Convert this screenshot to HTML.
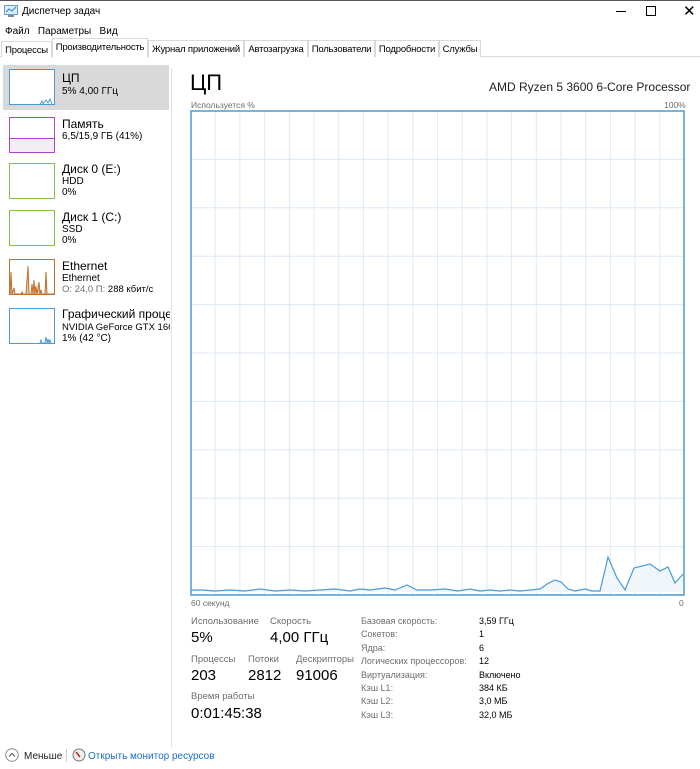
<!DOCTYPE html>
<html><head><meta charset="utf-8"><style>
*{margin:0;padding:0;box-sizing:border-box}
body{width:700px;height:769px;background:#fff;font-family:"Liberation Sans",sans-serif;position:relative;overflow:hidden;color:#000}
.a{position:absolute;white-space:nowrap}
.s{font-size:10px}
.g{color:#6d6d6d}
.tab{position:absolute;top:40px;height:17px;font-size:9.5px;padding:3px 0 0;text-align:center;border:1px solid #d9d9d9;border-bottom:none;background:#fff;overflow:hidden;white-space:nowrap;letter-spacing:-0.2px}
.th{position:absolute;left:9px;width:46px;height:36px;border:1px solid}
.t13{font-size:12px}
</style></head><body>
<div class="a" style="left:0;top:0;width:700px;height:1px;background:#555"></div>
<svg class="a" style="left:4px;top:5px" width="14" height="12"><rect x="0.5" y="0.5" width="13" height="9" fill="#dbeefc" stroke="#6aa0d0"/><polyline points="2,7 5,4 8,6 12,2" fill="none" stroke="#2a7fc4"/><rect x="4" y="10" width="6" height="2" fill="#888"/></svg>
<div class="a s" style="left:22px;top:6px">Диспетчер задач</div>
<div class="a" style="left:616px;top:11px;width:10px;height:1px;background:#000"></div>
<div class="a" style="left:646px;top:6px;width:10px;height:10px;border:1px solid #000"></div>
<div class="a" style="left:683px;top:2px;font-size:15px">✕</div>
<div class="a s" style="left:5px;top:26px">Файл&nbsp;&nbsp;&nbsp;Параметры&nbsp;&nbsp;&nbsp;Вид</div>
<div class="a" style="left:0;top:56px;width:700px;height:1px;background:#d9d9d9"></div>
<div class="tab" style="left:1px;top:41px;height:16px;width:51px">Процессы</div>
<div class="tab" style="left:52px;top:38px;height:20px;width:96px;border-bottom:1px solid #fff;padding-top:3px">Производительность</div>
<div class="tab" style="left:148px;width:96px">Журнал приложений</div>
<div class="tab" style="left:244px;width:64px">Автозагрузка</div>
<div class="tab" style="left:308px;width:67px">Пользователи</div>
<div class="tab" style="left:375px;width:64px">Подробности</div>
<div class="tab" style="left:439px;width:42px">Службы</div>

<div class="a" style="left:3px;top:65px;width:166px;height:45px;background:#d9d9d9"></div>
<div class="a" style="left:171px;top:68px;width:1px;height:680px;background:#e3e3e3"></div>

<div class="th" style="top:69px;border-color:#4a9bd6;background:#fff"><svg width="44" height="34"><polyline points="30,34 32,31 33,34 36,30 38,33 40,29 42,34" fill="none" stroke="#4a9bd6"/></svg></div>
<div class="a t13" style="left:62px;top:71px">ЦП</div>
<div class="a s" style="left:62px;top:86px">5% 4,00 ГГц</div>

<div class="th" style="top:117px;border-color:#b044c8"><div style="position:absolute;left:0;right:0;bottom:0;height:14px;background:#f1eef4;border-top:1px solid #b044c8"></div></div>
<div class="a t13" style="left:62px;top:117px">Память</div>
<div class="a s" style="left:62px;top:131px">6,5/15,9 ГБ (41%)</div>

<div class="th" style="top:163px;border-color:#7cc448"></div>
<div class="a t13" style="left:62px;top:162px">Диск 0 (E:)</div>
<div class="a s" style="left:62px;top:176px">HDD</div>
<div class="a s" style="left:62px;top:187px">0%</div>

<div class="th" style="top:210px;border-color:#7cc448"></div>
<div class="a t13" style="left:62px;top:210px">Диск 1 (C:)</div>
<div class="a s" style="left:62px;top:224px">SSD</div>
<div class="a s" style="left:62px;top:235px">0%</div>

<div class="th" style="top:259px;border-color:#c0702c"><svg width="44" height="34"><polyline points="0,34 1,12 2,34 4,28 5,34 11,34 12,32 13,34 16,34 18,6 19,34 21,34 22,24 23,34 24,20 25,34 26,26 27,34 29,22 30,34 31,30 32,34 35,34 36,12 37,34 44,34" fill="#e8c7a8" stroke="#c0702c"/></svg></div>
<div class="a t13" style="left:62px;top:259px">Ethernet</div>
<div class="a s" style="left:62px;top:273px">Ethernet</div>
<div class="a s g" style="left:62px;top:284px;font-size:9.5px"><span>O: 24,0 П: </span><span style="color:#000">288 кбит/с</span></div>

<div class="th" style="top:308px;border-color:#4a9bd6"><svg width="44" height="34"><polyline points="30,34 31,31 32,34 35,34 36,28 37,34 38,30 39,34 40,31 41,34" fill="none" stroke="#4a9bd6"/></svg></div>
<div class="a t13" style="left:62px;top:307px;width:108px;overflow:hidden">Графический процесс</div>
<div class="a s" style="left:62px;top:322px;width:108px;overflow:hidden;font-size:9.5px">NVIDIA GeForce GTX 1660 Ti</div>
<div class="a s" style="left:62px;top:333px">1% (42 °C)</div>

<div class="a" style="left:190px;top:70px;font-size:22px">ЦП</div>
<div class="a" style="left:489px;top:80px;font-size:12px;color:#222">AMD Ryzen 5 3600 6-Core Processor</div>
<div class="a g" style="left:191px;top:100px;font-size:8.5px">Используется %</div>
<div class="a g" style="left:664px;top:100px;font-size:8.5px">100%</div>

<svg class="a" style="left:190px;top:110px" width="496" height="487">
<g stroke="#deeaf5" stroke-width="1">
<path d="M25.2 0V486M49.9 0V486M74.6 0V486M99.3 0V486M124 0V486M148.7 0V486M173.4 0V486M198.1 0V486M222.8 0V486M247.5 0V486M272.2 0V486M296.9 0V486M321.6 0V486M346.3 0V486M371 0V486M395.7 0V486M420.4 0V486M445.1 0V486M469.8 0V486"/>
<path d="M0 49.4H495M0 97.8H495M0 146.2H495M0 194.6H495M0 243H495M0 291.4H495M0 339.8H495M0 388.2H495M0 436.6H495"/>
</g>
<polygon fill="#f1f6fb" points="1,482 1,480 12,480 25,481 40,480 55,481 70,479 85,481 100,480 115,481 130,480 145,479 160,481 170,479 180,480 195,478 205,480 217,475 227,480 240,480 255,479 268,481 280,479 290,481 300,480 310,481 320,480 330,481 340,480 350,479 357,474 365,470 371,472 378,479 385,481 395,479 402,481 410,481 418,447 427,468 435,480 444,458 460,454 470,461 478,457 485,473 493,464 493,482"/>
<polyline fill="none" stroke="#4a9bd6" stroke-width="1.2" points="1,480 12,480 25,481 40,480 55,481 70,479 85,481 100,480 115,481 130,480 145,479 160,481 170,479 180,480 195,478 205,480 217,475 227,480 240,480 255,479 268,481 280,479 290,481 300,480 310,481 320,480 330,481 340,480 350,479 357,474 365,470 371,472 378,479 385,481 395,479 402,481 410,481 418,447 427,468 435,480 444,458 460,454 470,461 478,457 485,473 493,464"/>
<rect x="1" y="1" width="493" height="484" fill="none" stroke="#4a9bd6" stroke-width="1.5"/>
</svg>
<div class="a g" style="left:191px;top:598px;font-size:8.5px">60 секунд</div>
<div class="a g" style="left:679px;top:598px;font-size:8.5px">0</div>

<div class="a g" style="left:191px;top:616px;font-size:9.5px">Использование</div>
<div class="a g" style="left:270px;top:616px;font-size:9.5px">Скорость</div>
<div class="a" style="left:191px;top:629px;font-size:15px">5%</div>
<div class="a" style="left:270px;top:629px;font-size:15px">4,00 ГГц</div>
<div class="a g" style="left:191px;top:654px;font-size:9.5px">Процессы</div>
<div class="a g" style="left:248px;top:654px;font-size:9.5px">Потоки</div>
<div class="a g" style="left:296px;top:654px;font-size:9.5px">Дескрипторы</div>
<div class="a" style="left:191px;top:667px;font-size:15px">203</div>
<div class="a" style="left:248px;top:667px;font-size:15px">2812</div>
<div class="a" style="left:296px;top:667px;font-size:15px">91006</div>
<div class="a g" style="left:191px;top:691px;font-size:9.5px">Время работы</div>
<div class="a" style="left:191px;top:705px;font-size:15px">0:01:45:38</div>

<div class="a g" style="left:361px;top:615px;font-size:9px;line-height:13.4px">Базовая скорость:<br>Сокетов:<br>Ядра:<br>Логических процессоров:<br>Виртуализация:<br>Кэш L1:<br>Кэш L2:<br>Кэш L3:</div>
<div class="a" style="left:479px;top:615px;font-size:9px;line-height:13.4px">3,59 ГГц<br>1<br>6<br>12<br>Включено<br>384 КБ<br>3,0 МБ<br>32,0 МБ</div>

<svg class="a" style="left:5px;top:748px" width="14" height="14"><circle cx="7" cy="7" r="6.3" fill="none" stroke="#888"/><polyline points="4,8.5 7,5.5 10,8.5" fill="none" stroke="#555"/></svg>
<div class="a s" style="left:24px;top:751px;color:#222">Меньше</div>
<div class="a" style="left:66px;top:749px;width:1px;height:13px;background:#ccc"></div>
<svg class="a" style="left:72px;top:748px" width="14" height="14"><circle cx="7" cy="7" r="6" fill="#eee" stroke="#777"/><line x1="4" y1="4" x2="8" y2="9" stroke="#c00" stroke-width="1.3"/></svg>
<div class="a s" style="left:88px;top:751px;color:#1a6fc7">Открыть монитор ресурсов</div>
</body></html>
